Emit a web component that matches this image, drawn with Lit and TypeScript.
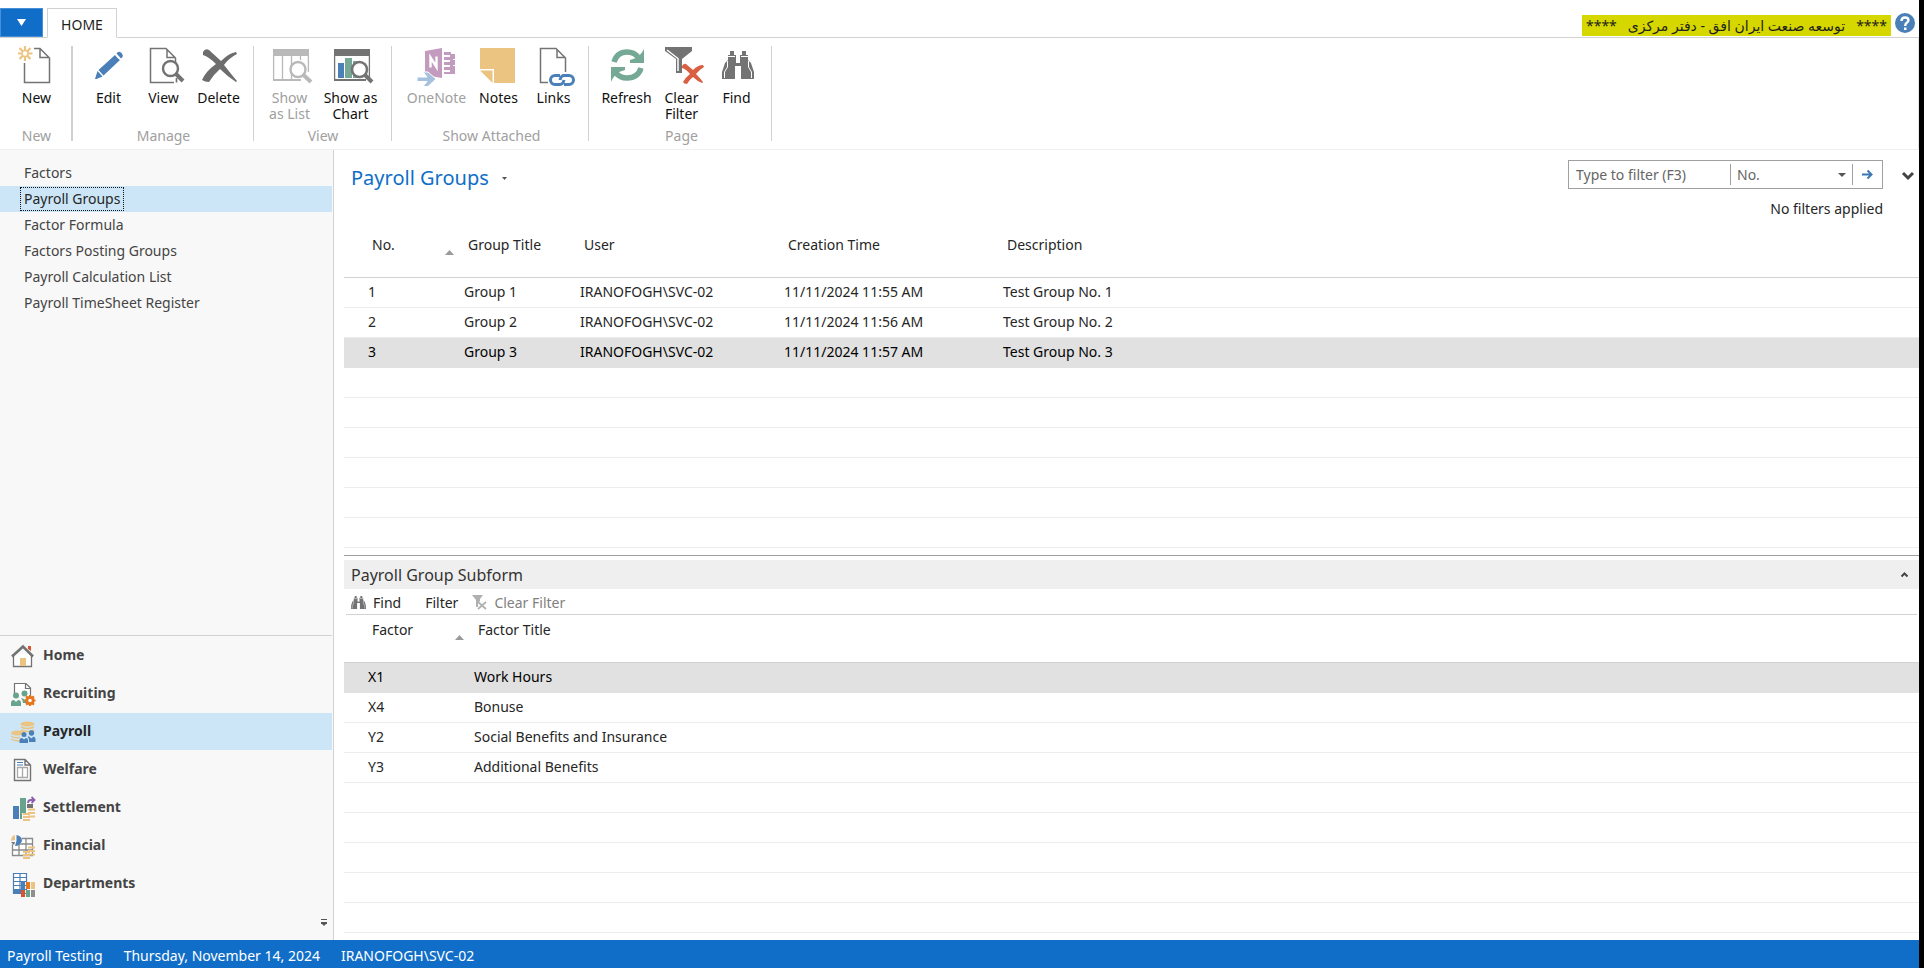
import { LitElement, html, svg, css } from "lit";
import { customElement, property, state } from "lit/decorators.js";
import { classMap } from "lit/directives/class-map.js";

const GREY = "#737373";
const BLUE = "#4a7fb8";
const TEAL = "#76a896";
const SAND = "#ecc481";

/* ---------- large ribbon icons, 40 x 40 ---------- */
const binoculars = svg`
  <path fill="${GREY}" d="M13 5H17V9H19V17H23V9H25V5H29V9H31V14L34 17L37 26V33H24V20H18V33H5V26L8 17L11 14V9H13Z"/>
  <path fill="none" stroke="#fff" stroke-width="1" d="M11 10.500H18M24 10.500H31M10.500 15V21L7.500 26V32M31.500 15V21L34.500 26V32M19 15.500H23"/>`;

const pageShape = svg`<path fill="none" stroke="${GREY}" stroke-width="1.500" d="M30 36.500H6.500V2.500H22L31.500 12V18M23 3V11.500H31"/>`;

const ribbonIcons: Record<string, unknown> = {
  new: svg`
    <path fill="none" stroke="${GREY}" stroke-width="1.500" d="M7.500 17V36.500H32.500V12L23 2.500H17M23 3V11.500H32"/>
    <path stroke="${SAND}" stroke-width="2.200" d="M8 0V5M8 10V15M1 7.500H5M11 7.500H15.500M2.500 2L6 5.500M10 9.500L13.500 13M13.500 2L10 5.500M6 9.500L2.500 13"/>
    <circle cx="8" cy="7.500" r="3" fill="none" stroke="${SAND}" stroke-width="1.500"/>`,
  edit: svg`
    <path fill="${BLUE}" d="M6 33L8.500 25L13.500 30.500L7.500 33ZM9.500 24L26 9L31 14L14.500 29.500ZM27.500 7.500L29 6Q31 5 33 7.500Q34.500 9.500 33 11.500L32 12.500Z"/>
    <path stroke="#fff" stroke-width="1" d="M27 9.500L30.500 13.500"/>`,
  view: svg`${pageShape}
    <circle cx="26.500" cy="22.500" r="7.500" fill="#fff" stroke="${GREY}" stroke-width="2.400"/>
    <path stroke="${GREY}" stroke-width="4" d="M32 28L39 35"/><path stroke="${GREY}" stroke-width="1.700" d="M32.500 32V36.500"/>`,
  delete: svg`
    <path fill="#6d6d6d" d="M4 6Q6 2 10 4L22 15Q30 7 37 6L38 8Q30 12 25 19Q32 28 38 35L37 36Q29 31 21 23Q14 29 10 36Q6 36 3 34Q7 25 17 18Q10 11 4 9Z"/>`,
  list: svg`
    <path fill="#b9b9b9" d="M3 3H39V10H3ZM3 33H31V35H3Z"/>
    <path fill="none" stroke="#b9b9b9" stroke-width="1.300" d="M3.600 9V35M12.500 9V33M21.500 9V33M30.500 9V14M38.400 9V26"/>
    <circle cx="28" cy="23.500" r="7.500" fill="#fff" stroke="#b9b9b9" stroke-width="2.400"/>
    <path stroke="#b9b9b9" stroke-width="4" d="M33.500 29L41 36"/>`,
  chart: svg`
    <path fill="${GREY}" d="M3 3H39V10H3ZM3 33H35V35H3Z"/>
    <path fill="none" stroke="${GREY}" stroke-width="1.300" d="M3.600 9V35M38.400 9V33"/>
    <path fill="${BLUE}" d="M7 17H13V32H7Z"/><path fill="${TEAL}" d="M14 12H21V32H14ZM22 15H28V32H22Z"/>
    <circle cx="28.500" cy="23.500" r="7.500" fill="#fff" stroke="${GREY}" stroke-width="2.600"/>
    <path stroke="${GREY}" stroke-width="4" d="M34 29L41 36"/>`,
  onenote: svg`
    <path fill="#c39bbf" d="M8 5L25 2V32L8 29Z"/>
    <path fill="#c39bbf" d="M27 6H34V8H38V13H36V14H38V19H36V20H38V28H27V26H33V24H27V21H33V19H27V16H33V14H27V11H33V9H27Z"/>
    <path fill="none" stroke="#fff" stroke-width="2.400" d="M13.500 21.500V11.500L19.500 21V10.500"/>
    <path fill="#a6c1de" stroke="#fff" stroke-width="1" d="M0 31H10L6 26H11L19 33L11 40.500H6L10 35.500H0Z"/>`,
  notes: svg`
    <path fill="${SAND}" d="M1 2H36V37H15V23H1Z"/><path fill="${SAND}" d="M1 24.500H13.500V37Z"/>`,
  links: svg`
    <path fill="none" stroke="${GREY}" stroke-width="1.500" d="M14 36.500H6.500V2.500H22L31.500 12V26M23 3V11.500H31"/>
    <g fill="none" stroke="${BLUE}" stroke-width="3"><path d="M26 29.500H21A4.500 4.500 0 0 0 21 38.500H26Q29 38.500 30 34"/><path d="M30 38.500H35A4.500 4.500 0 0 0 35 29.500H30Q27 29.500 26 34"/></g>`,
  refresh: svg`
    <path fill="none" stroke="${TEAL}" stroke-width="5.500" d="M7 16Q10 6 20 6Q27 6 31 11M34 22Q31 32 20 32Q13 32 9 27"/>
    <path fill="${TEAL}" d="M37 3V17H23V14L29 12Q34 9 37 3ZM4 36V21H18V24L12 26Q7 29 4 36Z"/>`,
  clear: svg`
    <path fill="${GREY}" d="M3 1H30V5L20 13V27H14V13L3 5Z"/>
    <path fill="none" stroke="#fff" stroke-width="1.500" d="M5 4L16 12.500V25"/>
    <path fill="#d95f43" d="M20 20Q22 17 24 18L31 24Q36 19 41 19L42 21Q37 24 34 28Q38 32 41 36L40 37Q35 35 31 31Q27 34 25 38Q22 38 21 36Q24 31 28 28Q24 23 20 22Z"/>`,
  find: svg`<g>${binoculars}</g>`,
};

/* ---------- navigation icons, 24 x 24 ---------- */
const coins = svg`
  <g fill="none" stroke="${SAND}" stroke-width="2.200"><path d="M17 13.500H24M17 17H24M17 20.500H24M12 18H19M12 21H19M12 24H19"/></g>`;

const navIcons: Record<string, unknown> = {
  home: svg`
    <path fill="#fff" stroke="${GREY}" stroke-width="1.300" d="M2.500 10V22.500H20.500V10"/>
    <path fill="${SAND}" d="M9 14H15V22H9Z"/><path fill="#d9532f" d="M17 2H20V7L17 5Z"/>
    <path fill="none" stroke="${GREY}" stroke-width="2.600" d="M1 12.500L12 2.500L22 12.500"/>`,
  recruiting: svg`
    <path fill="#fff" stroke="${GREY}" stroke-width="1.200" d="M3.500 12V1.500H15L19.500 6V15M14.500 2V6.500H19"/>
    <g fill="#68a38d"><circle cx="5" cy="13.500" r="3"/><path d="M0 24V21Q0 18 3 18L5 20L7 18Q10 18 10 21V24Z"/><circle cx="13.500" cy="11.500" r="3"/><path d="M10 16Q12 16 14 18L16 16V21H12Q12 18 10 16Z"/></g>
    <circle cx="19" cy="18.500" r="3.200" fill="#fff" stroke="#e6761c" stroke-width="2.800"/>
    <path fill="none" stroke="#e6761c" stroke-width="2.200" d="M19 13V15M19 22V24M13.500 18.500H15.500M22.500 18.500H24.500M15 14.500L17 16M21 21L23 22.500M23 14.500L21 16M17 21L15 22.500"/>`,
  payroll: svg`
    <g fill="${SAND}"><ellipse cx="16.500" cy="4" rx="7" ry="2.500"/><ellipse cx="6.500" cy="13" rx="6.500" ry="2.500"/></g>
    <g fill="none" stroke="${SAND}" stroke-width="1.400"><path d="M10 7Q16 10 23 7M10 10Q16 13 23 10M0 16Q4 18.500 9 17.500M0 19Q4 21.500 9 20.500"/></g>
    <g fill="${BLUE}"><circle cx="13" cy="14.500" r="2.500"/><path d="M8.500 23V20Q9 18 11 18L13 19.500L15 18Q17 18 17 20V23Z"/><circle cx="20.500" cy="13" r="2.700"/><path d="M16.500 16.500H18L20.500 18.500L22.500 16.500Q24.500 17 24.500 19V22H18V19Z"/></g>`,
  welfare: svg`
    <path fill="#fff" stroke="${GREY}" stroke-width="1.400" d="M3.500 1.500H14L19.500 7V22.500H3.500ZM14 2V7H19"/>
    <path stroke="${BLUE}" stroke-width="1.200" d="M6 4.500H12M6 7H12"/>
    <path fill="#fff" stroke="#a8a8a8" stroke-width="1.300" d="M6.500 9.500H16.500V19.500H6.500ZM11.500 9.500V19.500"/>`,
  settlement: svg`
    <path fill="${BLUE}" d="M2 10H8V23H2Z"/><path fill="#68a38d" d="M9 2H15V17H11V23H9Z"/>
    <path fill="${GREY}" d="M16 8H22V12H16Z"/>
    <path fill="none" stroke="#8b5fae" stroke-width="1.800" d="M17 7Q17 4 20 4H23M20.500 1L23.500 4L20.500 7"/>${coins}`,
  financial: svg`
    <path fill="#fff" stroke="#8a8a8a" stroke-width="1.300" d="M1.500 5V21.500H21.500V4.500H9M1.500 10H21.500M1.500 16H21.500M8 10V21.500M15 4.500V21.500"/>
    <circle cx="5" cy="5.500" r="6" fill="#f8f8f8"/><path fill="${SAND}" d="M4 1V6L0 7Q0 2 4 1Z"/><path fill="${BLUE}" d="M5.500 1Q11 2 11 7Q9 12 4 12L5.500 7Z"/><path fill="${GREY}" d="M0 8H4L3 11Z"/>${coins}`,
  departments: svg`
    <path fill="#fff" stroke="${BLUE}" stroke-width="1.200" d="M2.500 1.500H15.500V21.500H2.500ZM2 5.500H16M2 9.500H16M2 13.500H16M2 17.500H16M9 1V21"/>
    <path fill="${BLUE}" d="M10 10H14V17H10ZM2 17.500H10V22H2Z"/><path fill="#e6761c" d="M15 10H19V17H15Z"/><path fill="${SAND}" d="M20 10H24V17H20Z"/>
    <path fill="#d9532f" d="M10 18H14V25H10Z"/><path fill="#68a38d" d="M15 18H19V25H15Z"/><path fill="#8f8f8f" d="M20 18H24V25H20Z"/>`,
};

const base = css`
  * { box-sizing: border-box; }
  button, input, select { font: inherit; color: inherit; background: none; border: 0; margin: 0; padding: 0; border-radius: 0; outline: 0; }
  a { color: inherit; text-decoration: none; }
  svg { display: block; flex: none; overflow: visible; }
`;

interface Command { icon: string; label: string; off?: boolean; size?: string; }
interface Group { title: string; kind?: string; commands: Command[]; }

@customElement("ribbon-bar")
class RibbonBar extends LitElement {
  static styles = [base, css`
    :host { display: block; }
    .tabs { display: flex; align-items: flex-end; height: 38px; padding-right: 4px; border-bottom: 1px solid #d2d2d2; }
    .menu { width: 43px; height: 29px; margin: 0 4px 0 0; background: #106ec8; border: 1px solid #4590d8; display: grid; place-items: center; }
    .tab { height: 30px; width: 70px; margin-bottom: -1px; padding-top: 2px; border: 1px solid #d2d2d2; border-bottom-color: #fff; background: #fff; color: #1e1e1e; line-height: 28px; text-align: center; }
    .company { margin: 0 4px 1px auto; padding: 0 4px; background: #d7d700; color: #1e1e1e; line-height: 21px; white-space: pre; font-family: "Noto Sans", "DejaVu Sans", sans-serif; }
    .help { margin-bottom: 4px; }
    .groups { display: flex; height: 112px; padding: 8px 0; border-bottom: 1px solid #f0f0f0; border-right: 1px solid #e4e4e4; }
    .group { display: flex; flex-direction: column; justify-content: space-between; padding: 0 7px 0 8px; border-right: 1px solid #d2d2d2; }
    .group.first { border-right-width: 2px; padding-left: 9px; }
    .group.roomy { padding-left: 10px; }
    .commands { display: flex; align-items: flex-start; }
    .command { width: 55px; display: flex; flex-direction: column; align-items: center; gap: 4px; line-height: 16px; color: #111; text-align: center; }
    .command.md { width: 67px; }
    .command.lg { width: 69px; }
    .command:disabled { color: #a0a0a0; }
    .label { white-space: pre-line; }
    .title { height: 14px; line-height: 18px; text-align: center; color: #a0a0a0; }
  `];

  @property({ attribute: false }) groups: Group[] = [];

  render() {
    return html`
      <div class="tabs">
        <button class="menu" aria-label="Application menu"><svg width="9" height="7"><path fill="#fff" d="M0 0H9L4.500 7Z"/></svg></button>
        <button class="tab">HOME</button>
        <div class="company" dir="rtl">****   توسعه صنعت ایران افق - دفتر مرکزی   ****</div>
        <button class="help" aria-label="Help">
          <svg width="20" height="20" viewBox="0 0 20 20"><circle cx="10" cy="10" r="10" fill="${BLUE}"/>
            <path fill="none" stroke="#fff" stroke-width="2.400" d="M6.500 8Q6.500 4.500 10 4.500Q13.500 4.500 13.500 7.300Q13.500 8.800 11.500 10Q10.200 11 10.200 13"/><path fill="#fff" d="M9 14.500H11.500V17H9Z"/></svg>
        </button>
      </div>
      <div class="groups">
        ${this.groups.map((g) => html`
          <section class="group ${g.kind ?? ""}">
            <div class="commands">
              ${g.commands.map((c) => html`
                <button class="command ${c.size ?? ""}" ?disabled=${c.off}>
                  <svg width="40" height="40" viewBox="0 0 40 40">${ribbonIcons[c.icon]}</svg>
                  <span class="label">${c.label}</span>
                </button>`)}
            </div>
            <div class="title">${g.title}</div>
          </section>`)}
      </div>`;
  }
}

@customElement("side-nav")
class SideNav extends LitElement {
  static styles = [base, css`
    :host { display: flex; flex-direction: column; width: 334px; padding-right: 1px; border-right: 1px solid #d2d2d2; background: #f8f8f8; color: #444; }
    .pages { padding-top: 10px; flex: 1; }
    .page { display: flex; align-items: center; height: 26px; padding-left: 20px; }
    .page span { padding: 0 3px; border: 1px solid transparent; line-height: 22px; }
    .selected { background: #cde6f7; color: #262626; }
    .page.selected span { border: 1px dotted #111; }
    .areas { border-top: 1px solid #d2d2d2; padding-top: 1px; }
    .area { display: flex; align-items: center; gap: 8px; height: 37px; margin-bottom: 1px; padding-left: 11px; font-weight: 700; }
    .area span { padding-bottom: 2px; }
    .foot { display: flex; align-items: flex-start; justify-content: flex-end; height: 37px; padding: 16px 5px 0 0; }
  `];

  @property({ attribute: false }) pages: string[] = [];
  @property({ attribute: false }) areas: string[] = [];
  @state() page = "Payroll Groups";
  @state() area = "Payroll";

  render() {
    return html`
      <nav class="pages" aria-label="Pages">
        ${this.pages.map((p) => html`<a href="#" class=${classMap({ page: true, selected: p === this.page })} @click=${() => (this.page = p)}><span>${p}</span></a>`)}
      </nav>
      <nav class="areas" aria-label="Areas">
        ${this.areas.map((a) => html`
          <a href="#" class=${classMap({ area: true, selected: a === this.area })} @click=${() => (this.area = a)}>
            <svg width="24" height="24" viewBox="0 0 24 24">${navIcons[a.toLowerCase()]}</svg><span>${a}</span>
          </a>`)}
      </nav>
      <div class="foot"><button aria-label="Configure navigation"><svg width="6" height="8"><path fill="#555" d="M0 0H6V1H0ZM0 3H6V5H5L3 7L1 5H0Z"/></svg></button></div>`;
  }
}

@customElement("data-grid")
class DataGrid extends LitElement {
  static styles = [base, css`
    :host { display: flex; flex-direction: column; min-height: 0; }
    table { width: 100%; table-layout: fixed; border-collapse: separate; border-spacing: 0; color: #262626; }
    th { padding: 0 6px 0 8px; border-bottom: 1px solid #d2d2d2; font-weight: 400; text-align: left; vertical-align: top; line-height: 20px; white-space: nowrap; }
    td { height: 30px; padding: 0 0 2px 4px; border-bottom: 1px solid #ececec; line-height: 20px; white-space: nowrap; }
    th:first-child { padding-left: 28px; }
    td:first-child { padding-left: 24px; }
    .tall th { height: 53px; padding-top: 10px; }
    .short th { height: 48px; padding-top: 5px; }
    .sorted { display: flex; justify-content: space-between; align-items: flex-end; }
    .current td { background: #e1e1e1; border-color: #e1e1e1; color: #000; }
    .blank { flex: 1; background: repeating-linear-gradient(#fff 0 29px, #ececec 29px 30px); }
  `];

  @property({ attribute: false }) columns: { title: string; width?: number }[] = [];
  @property({ attribute: false }) rows: string[][] = [];
  @property({ type: Number }) current = 0;
  @property() head = "tall";

  render() {
    return html`
      <table>
        <colgroup>${this.columns.map((c) => html`<col style=${c.width ? `width:${c.width}px` : ""}>`)}</colgroup>
        <thead class=${this.head}><tr>
          ${this.columns.map((c, i) => html`<th scope="col">${i === 0
            ? html`<div class="sorted">${c.title}<svg width="9" height="5"><path fill="#9a9a9a" d="M0 5L4.500 0L9 5Z"/></svg></div>`
            : c.title}</th>`)}
        </tr></thead>
        <tbody>
          ${this.rows.map((r, i) => html`<tr class=${classMap({ current: i === this.current })}>${r.map((v) => html`<td>${v}</td>`)}</tr>`)}
        </tbody>
      </table>
      <div class="blank"></div>`;
  }
}

@customElement("app-root")
class AppRoot extends LitElement {
  static styles = [base, css`
    :host { display: flex; flex-direction: column; height: 100vh; min-height: 700px; border-right: 5px solid #000; background: #fff; color: #262626; font: 14px/20px "Noto Sans", "Open Sans", sans-serif; }
    .body { flex: 1; display: flex; min-height: 0; }
    main { flex: 1; min-width: 0; display: flex; flex-direction: column; padding-left: 10px; }
    .list { flex: 405 1 0; display: flex; flex-direction: column; min-height: 0; }
    .subform { flex: 380 1 0; display: flex; flex-direction: column; min-height: 0; border-top: 1px solid #a0a0a0; padding-top: 4px; }
    .top { display: flex; justify-content: space-between; height: 75px; padding: 10px 5px 0 7px; }
    .heading { display: flex; align-items: center; gap: 13px; height: 36px; }
    h1 { margin: 0; font-size: 20px; line-height: 28px; font-weight: 400; color: #106ec8; }
    .tools { display: grid; grid-template-columns: auto auto; column-gap: 19px; row-gap: 10px; align-content: start; align-items: center; }
    .filter { display: flex; align-items: center; height: 29px; width: 315px; border: 1px solid #a0a0a0; color: #666; }
    .filter input { flex: 1; min-width: 0; height: 21px; padding-left: 7px; border-right: 1px solid #a0a0a0; }
    .filter input::placeholder { color: #666; opacity: 1; }
    .pick { display: grid; align-items: center; width: 122px; height: 21px; border-right: 1px solid #a0a0a0; }
    .pick select { grid-area: 1 / 1; appearance: none; padding-left: 6px; width: 100%; }
    .pick svg { grid-area: 1 / 1; justify-self: end; margin-right: 6px; pointer-events: none; }
    .go { width: 29px; display: grid; place-items: center; }
    .status { text-align: right; color: #262626; }
    data-grid { flex: 1; }
    .subhead { display: flex; align-items: center; justify-content: space-between; height: 29px; padding: 0 11px 0 7px; background: #efefef; }
    h2 { margin: 0; font-size: 16px; line-height: 22px; font-weight: 400; color: #333; }
    .actions { display: flex; align-items: center; height: 26px; margin: 0 2px; padding: 2px 0 0 5px; gap: 14px; border-bottom: 1px solid #d2d2d2; }
    .actions button { display: flex; align-items: center; gap: 7px; }
    .actions button + button { margin-left: 10px; }
    .actions button:disabled { margin-left: 0; color: #808080; }
    footer { display: flex; align-items: center; gap: 21px; height: 28px; padding: 3px 7px 0; background: #106ec8; color: #fff; }
  `];

  private groups: Group[] = [
    { title: "New", kind: "first", commands: [{ icon: "new", label: "New" }] },
    { title: "Manage", commands: [{ icon: "edit", label: "Edit" }, { icon: "view", label: "View" }, { icon: "delete", label: "Delete" }] },
    { title: "View", commands: [{ icon: "list", label: "Show\nas List", off: true }, { icon: "chart", label: "Show as\nChart", size: "md" }] },
    { title: "Show Attached", kind: "roomy", commands: [{ icon: "onenote", label: "OneNote", off: true, size: "lg" }, { icon: "notes", label: "Notes" }, { icon: "links", label: "Links" }] },
    { title: "Page", kind: "roomy", commands: [{ icon: "refresh", label: "Refresh" }, { icon: "clear", label: "Clear\nFilter" }, { icon: "find", label: "Find" }] },
  ];
  private pages = ["Factors", "Payroll Groups", "Factor Formula", "Factors Posting Groups", "Payroll Calculation List", "Payroll TimeSheet Register"];
  private areas = ["Home", "Recruiting", "Payroll", "Welfare", "Settlement", "Financial", "Departments"];
  private groupColumns = [{ title: "No.", width: 116 }, { title: "Group Title", width: 116 }, { title: "User", width: 204 }, { title: "Creation Time", width: 219 }, { title: "Description" }];
  private groupRows = [
    ["1", "Group 1", "IRANOFOGH\\SVC-02", "11/11/2024 11:55 AM", "Test Group No. 1"],
    ["2", "Group 2", "IRANOFOGH\\SVC-02", "11/11/2024 11:56 AM", "Test Group No. 2"],
    ["3", "Group 3", "IRANOFOGH\\SVC-02", "11/11/2024 11:57 AM", "Test Group No. 3"],
  ];
  private factorColumns = [{ title: "Factor", width: 126 }, { title: "Factor Title" }];
  private factorRows = [["X1", "Work Hours"], ["X4", "Bonuse"], ["Y2", "Social Benefits and Insurance"], ["Y3", "Additional Benefits"]];

  render() {
    return html`
      <ribbon-bar .groups=${this.groups}></ribbon-bar>
      <div class="body">
        <side-nav .pages=${this.pages} .areas=${this.areas}></side-nav>
        <main>
          <section class="list">
            <div class="top">
              <div class="heading"><h1>Payroll Groups</h1><button aria-label="Views"><svg width="5" height="3"><path fill="#555" d="M0 0H5L2.500 3Z"/></svg></button></div>
              <div class="tools">
                <div class="filter">
                  <input type="text" aria-label="Filter" placeholder="Type to filter (F3)">
                  <div class="pick">
                    <select aria-label="Filter field"><option>No.</option></select>
                    <svg width="8" height="4"><path fill="#555" d="M0 0H8L4 4Z"/></svg>
                  </div>
                  <button class="go" aria-label="Apply filter"><svg width="11" height="9" viewBox="0 0 11 9"><path fill="none" stroke="#3d78b4" stroke-width="2" d="M0 4.500H9.500M5.500 0.500L9.500 4.500L5.500 8.500"/></svg></button>
                </div>
                <button aria-label="Expand filter pane"><svg width="12" height="8" viewBox="0 0 12 8"><path fill="none" stroke="#444" stroke-width="3" d="M1 2L6 7L11 2"/></svg></button>
                <div class="status">No filters applied</div>
              </div>
            </div>
            <data-grid .columns=${this.groupColumns} .rows=${this.groupRows} current="2"></data-grid>
          </section>
          <section class="subform">
            <div class="subhead"><h2>Payroll Group Subform</h2><button aria-label="Collapse"><svg width="7" height="5" viewBox="0 0 7 5"><path fill="none" stroke="#444" stroke-width="2" d="M0.500 4.500L3.500 1.500L6.500 4.500"/></svg></button></div>
            <div class="actions">
              <button><svg width="15" height="15" viewBox="5 4 32 30">${binoculars}</svg>Find</button>
              <button>Filter</button>
              <button disabled><svg width="15" height="15" viewBox="0 0 15 15"><path fill="#b0b0b0" d="M0 0H11L8 4V6L6 8V12H4V5Z"/><path stroke="#b0b0b0" stroke-width="1.700" d="M6 7L14 14M14 7L6 14"/></svg>Clear Filter</button>
            </div>
            <data-grid head="short" .columns=${this.factorColumns} .rows=${this.factorRows} current="0"></data-grid>
          </section>
        </main>
      </div>
      <footer><span>Payroll Testing</span><span>Thursday, November 14, 2024</span><span>IRANOFOGH\\SVC-02</span></footer>`;
  }
}
